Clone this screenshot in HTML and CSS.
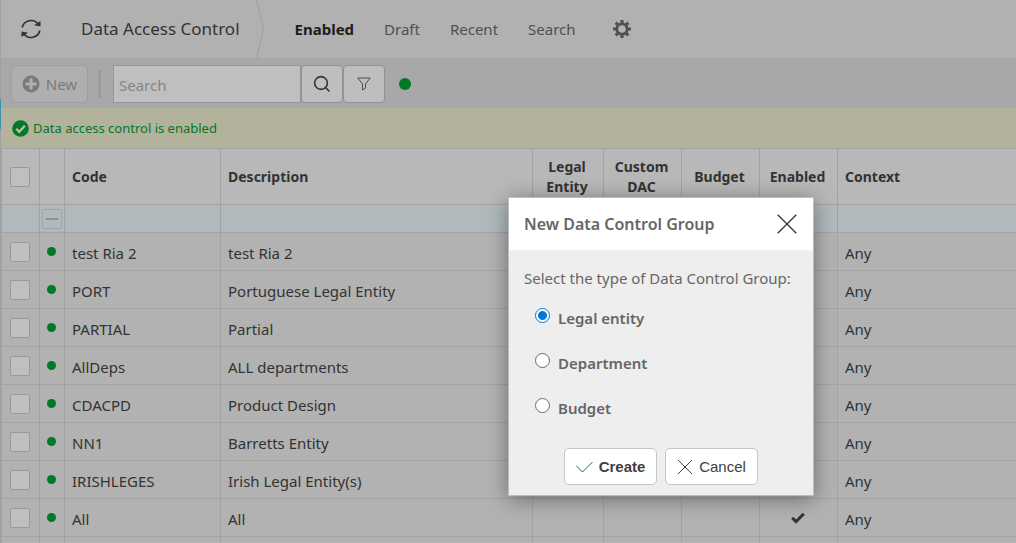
FILE: index.html
```
<!DOCTYPE html>
<html lang="en">
<head>
<meta charset="utf-8">
<title>Data Access Control</title>
<link rel="stylesheet" href="styles.css">
</head>
<body>
<div class="edge"><span class="edge-mark"></span></div>
<div class="page">
  <header class="header">
    <button class="icon-btn refresh" aria-label="Refresh">
      <svg width="22" height="22" viewBox="0 0 22 22" fill="none" stroke="#333" stroke-width="1.700"><path d="M2.200 9.500A9 9 0 0 1 18.200 6.200M19.800 12.500A9 9 0 0 1 3.800 15.800"/><path d="M20.500 3v5.500l-6.500-1.200zM1.500 19v-5.500l6.500 1.200z" fill="#333" stroke="none"/></svg>
    </button>
    <h1 class="title">Data Access Control</h1>
    <svg class="chevron" width="9" height="58" viewBox="0 0 9 58" fill="none" stroke="#a0a0a0"><path d="M.5 0L7.500 28.500L.5 58"/></svg>
    <nav class="tabs">
      <a class="tab active" href="#enabled">Enabled</a>
      <a class="tab" href="#draft">Draft</a>
      <a class="tab" href="#recent">Recent</a>
      <a class="tab" href="#search">Search</a>
    </nav>
    <button class="icon-btn" aria-label="Settings">
      <svg width="20" height="20" viewBox="-10 -10 20 20" fill="none" stroke="#505050"><circle r="5.200" stroke-width="2.800"/><path stroke-width="3.200" d="M0-9V-6M0 9V6M-9 0H-6M9 0H6M-6.300-6.300L-4.300-4.300M6.300-6.300L4.300-4.300M-6.300 6.300L-4.300 4.300M6.300 6.300L4.300 4.300"/></svg>
    </button>
  </header>

  <div class="toolbar">
    <button class="new-btn" disabled>
      <svg width="18" height="18" viewBox="0 0 18 18"><circle cx="9" cy="9" r="8.500" fill="#7a7a7a"/><path d="M9 3.500v11M3.500 9h11" stroke="#b0b0b0" stroke-width="3"/></svg>
      New
    </button>
    <span class="divider"></span>
    <div class="search-group">
      <input class="search" type="text" placeholder="Search" aria-label="Search">
      <button class="tool-btn" aria-label="Run search">
        <svg width="18" height="18" viewBox="0 0 18 18" fill="none" stroke="#333" stroke-width="1.600"><circle cx="8" cy="8" r="6.400"/><path d="M12.500 12.500L16.500 16.500"/></svg>
      </button>
      <button class="tool-btn" aria-label="Filter">
        <svg width="14" height="14" viewBox="0 0 14 14" fill="none" stroke="#4c4c4c"><path d="M.8 1h12.400L8.500 7v4.200L5.500 13V7z"/></svg>
      </button>
    </div>
    <span class="status-dot"></span>
  </div>

  <div class="banner">
    <svg width="17" height="17" viewBox="0 0 17 17" fill="none"><circle cx="8.500" cy="8.500" r="8.300" fill="#007a28"/><path d="M4.200 8.800l3 3L12.800 5.800" stroke="#c0bf9f" stroke-width="2.200"/></svg>
    Data access control is enabled
  </div>

  <table class="grid">
    <colgroup><col class="c-check"><col class="c-dot"><col class="c-code"><col class="c-desc"><col class="c-legal"><col class="c-flag"><col class="c-flag"><col class="c-flag"><col></colgroup>
    <thead>
      <tr>
        <th class="mid"><input type="checkbox" class="box" aria-label="Select all"></th><th></th>
        <th>Code</th><th>Description</th><th class="mid">Legal Entity</th><th class="mid">Custom DAC</th><th class="mid">Budget</th><th class="mid">Enabled</th><th>Context</th>
      </tr>
      <tr class="group"><td></td><td class="mid"><button class="collapse" aria-label="Collapse group"></button></td><td></td><td></td><td></td><td></td><td></td><td></td><td></td></tr>
    </thead>
    <tbody>
      <tr><td class="mid"><input type="checkbox" class="box" aria-label="test Ria 2"></td><td class="mid"><span class="dot"></span></td><td class="txt">test Ria 2</td><td class="txt">test Ria 2</td><td></td><td></td><td></td><td></td><td class="txt">Any</td></tr>
      <tr><td class="mid"><input type="checkbox" class="box" aria-label="PORT"></td><td class="mid"><span class="dot"></span></td><td class="txt">PORT</td><td class="txt">Portuguese Legal Entity</td><td></td><td></td><td></td><td></td><td class="txt">Any</td></tr>
      <tr><td class="mid"><input type="checkbox" class="box" aria-label="PARTIAL"></td><td class="mid"><span class="dot"></span></td><td class="txt">PARTIAL</td><td class="txt">Partial</td><td></td><td></td><td></td><td></td><td class="txt">Any</td></tr>
      <tr><td class="mid"><input type="checkbox" class="box" aria-label="AllDeps"></td><td class="mid"><span class="dot"></span></td><td class="txt">AllDeps</td><td class="txt">ALL departments</td><td></td><td></td><td></td><td></td><td class="txt">Any</td></tr>
      <tr><td class="mid"><input type="checkbox" class="box" aria-label="CDACPD"></td><td class="mid"><span class="dot"></span></td><td class="txt">CDACPD</td><td class="txt">Product Design</td><td></td><td></td><td></td><td></td><td class="txt">Any</td></tr>
      <tr><td class="mid"><input type="checkbox" class="box" aria-label="NN1"></td><td class="mid"><span class="dot"></span></td><td class="txt">NN1</td><td class="txt">Barretts Entity</td><td></td><td></td><td></td><td></td><td class="txt">Any</td></tr>
      <tr><td class="mid"><input type="checkbox" class="box" aria-label="IRISHLEGES"></td><td class="mid"><span class="dot"></span></td><td class="txt">IRISHLEGES</td><td class="txt">Irish Legal Entity(s)</td><td></td><td></td><td></td><td></td><td class="txt">Any</td></tr>
      <tr><td class="mid"><input type="checkbox" class="box" aria-label="All"></td><td class="mid"><span class="dot"></span></td><td class="txt">All</td><td class="txt">All</td><td></td><td></td><td></td><td class="mid"><svg class="tick" width="14" height="12" viewBox="0 0 14 12" fill="none" stroke="#333" stroke-width="3"><path d="M1.200 5.800l3.800 3.800L12.800 1.800"/></svg></td><td class="txt">Any</td></tr>
      <tr class="spacer"><td></td><td></td><td></td><td></td><td></td><td></td><td></td><td></td><td></td></tr>
    </tbody>
  </table>
</div>

<form class="dialog" role="dialog" aria-labelledby="dialog-title">
  <div class="dialog-head">
    <h2 class="dialog-title" id="dialog-title">New Data Control Group</h2>
    <button type="button" class="icon-btn" aria-label="Close">
      <svg width="20" height="20" viewBox="0 0 20 20" stroke="#333" stroke-width="1.300"><path d="M.7.700l18.600 18.600M19.300.700L.7 19.300"/></svg>
    </button>
  </div>
  <fieldset class="dialog-body">
    <legend class="prompt">Select the type of Data Control Group:</legend>
    <label class="option"><input type="radio" name="type" class="radio" checked><span>Legal entity</span></label>
    <label class="option"><input type="radio" name="type" class="radio"><span>Department</span></label>
    <label class="option"><input type="radio" name="type" class="radio"><span>Budget</span></label>
  </fieldset>
  <div class="actions">
    <button type="button" class="action primary">
      <svg width="17" height="17" viewBox="0 0 17 17" fill="none" stroke="#1f6b3c"><path d="M.5 8l6 6L16.500 4"/></svg>
      Create
    </button>
    <button type="button" class="action">
      <svg width="16" height="16" viewBox="0 0 16 16" stroke="#404040"><path d="M1 1l14 14M15 1L1 15"/></svg>
      Cancel
    </button>
  </div>
</form>
</body>
</html>
```
FILE: styles.css
```
* { box-sizing: border-box; }
html, body { height: 100%; }
body {
  margin: 0;
  display: flex;
  overflow: hidden;
  background: #b2b2b2;
  color: #333;
  font: 15px/20px "Noto Sans", sans-serif;
}
button, input { font: inherit; color: inherit; margin: 0; }
button { display: flex; align-items: center; justify-content: center; padding: 0; }
svg { display: block; flex: none; }

.edge { width: 1px; flex: none; padding-top: 99px; background: #a0a0a0; }
.edge-mark { display: block; height: 30px; background: #3f8fb3; }
.page { flex: 1; min-width: 0; }
.icon-btn { border: 0; background: none; }

.header {
  display: flex;
  align-items: center;
  height: 60px;
  border-bottom: 2px solid #a6a6a6;
  background: #b1b1b1;
}
.refresh { margin-left: 19px; }
.title { margin: 0 16px 0 39px; font-size: 17px; font-weight: 400; white-space: nowrap; }
.tabs { display: flex; gap: 30px; margin: 0 36px 0 30px; }
.tab { color: #505050; text-decoration: none; }
.tab.active { color: #1c1c1c; font-weight: 700; }

.toolbar { display: flex; align-items: center; height: 48px; padding: 0 10px; background: #a8a8a8; }
.new-btn {
  gap: 6px;
  width: 77px;
  height: 38px;
  border: 1px solid #9e9e9e;
  border-radius: 4px;
  background: #afafaf;
  color: #7a7a7a;
}
.divider { width: 3px; height: 28px; margin: 0 12px 0 10px; background: #9b9b9b; }
.search-group { display: flex; }
.search {
  width: 188px;
  height: 38px;
  padding: 2px 5px 0;
  border: 1px solid #969696;
  background: #bfbfbf;
}
.search::placeholder { color: #858585; opacity: 1; }
.tool-btn { width: 42px; height: 38px; border: 1px solid #929292; border-radius: 4px; background: #bebebe; }
.status-dot { width: 12px; height: 12px; margin-left: 14px; border-radius: 50%; background: #007a28; }

.banner {
  display: flex;
  align-items: center;
  gap: 4px;
  height: 40px;
  padding: 0 12px 0 11px;
  background: #b3b29c;
  color: #007a28;
  font-size: 13px;
}

.grid { width: 100%; border-collapse: collapse; table-layout: fixed; }
.grid th, .grid td { border: 1px solid #a3a3a3; padding: 0 7px; text-align: left; }
.grid th:last-child, .grid td:last-child { border-right: 0; }
.grid th { height: 56px; background: #b8b8b8; font-size: 14px; font-weight: 700; }
.grid td { height: 38px; background: #b2b2b2; }
.grid .mid { padding: 0 5px 0 3px; text-align: center; }
.grid .txt { padding-top: 3px; }
.grid .group td { height: 28px; background: #b0babd; }
.grid .spacer td { height: 6px; border-bottom: 0; }
.c-check { width: 38px; }
.c-dot { width: 25px; }
.c-code { width: 156px; }
.c-desc { width: 312px; }
.c-legal { width: 71px; }
.c-flag { width: 78px; }
.box {
  display: block;
  appearance: none;
  width: 20px;
  height: 20px;
  margin: 0 auto;
  border: 1px solid #999;
  border-radius: 2px;
  background: #bfbfbf;
}
.collapse { width: 20px; height: 20px; margin: 0 -2px 0 -1px; border: 1px solid #9fa5a7; border-radius: 2px; background: none; }
.collapse::before { content: ""; width: 12px; height: 2px; background: #8c9194; }
.dot { display: block; width: 9px; height: 9px; margin: 0 auto; border-radius: 50%; background: #007a28; }
.tick { margin: 0 auto; }

.dialog {
  position: absolute;
  left: 508px;
  top: 197px;
  width: 306px;
  border: 1px solid #bdbdbd;
  background: #eee;
  box-shadow: 0 3px 20px rgba(0, 0, 0, 0.4);
  color: #666;
}
.dialog-head {
  display: flex;
  align-items: center;
  justify-content: space-between;
  height: 53px;
  padding: 0 16px 0 15px;
  border-bottom: 1px solid #f3f3f3;
  background: #fff;
}
.dialog-title { margin: 0; font-size: 16px; font-weight: 600; white-space: nowrap; }
.dialog-body { margin: 0; padding: 17px 0 0 15px; border: 0; display: flex; flex-direction: column; }
.prompt { float: left; padding: 0; margin-bottom: 20px; white-space: nowrap; }
.option { display: flex; align-items: flex-start; gap: 7px; height: 20px; margin: 0 0 25px 11px; font-weight: 600; clear: both; }
.option span { padding-left: 1px; }
.radio {
  appearance: none;
  width: 15px;
  height: 15px;
  border: 1px solid #6b6b6b;
  border-radius: 50%;
  background: #fff;
}
.radio:checked { border-color: #0078d7; background: radial-gradient(circle, #0078d7 0 4px, #fff 5px); }
.actions { display: flex; justify-content: center; gap: 8px; padding: 5px 0 10px; }
.action {
  gap: 6px;
  width: 93px;
  height: 37px;
  border: 1px solid #c6c6c6;
  border-radius: 5px;
  background: #fff;
  color: #404040;
  font: 15px/20px "Liberation Sans", sans-serif;
}
.action.primary { font-weight: 700; }
```
